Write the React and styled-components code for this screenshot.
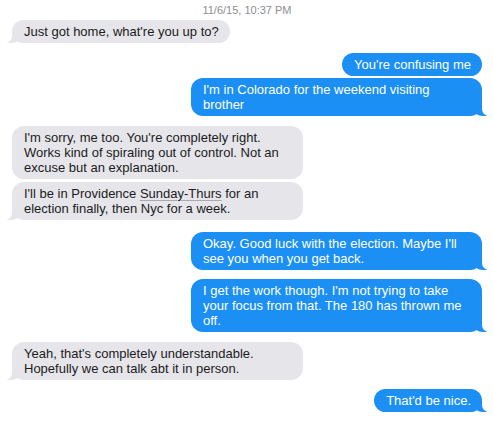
import React from 'react';
import styled, { createGlobalStyle } from 'styled-components';

const GlobalStyle = createGlobalStyle`
  body {
    margin: 0;
    background: #fff;
    font-family: "Liberation Sans", Arial, sans-serif;
  }
`;

const Thread = styled.div`
  width: 493px;
  height: 423px;
  box-sizing: border-box;
  padding: 4px 11px 0 12px;
  display: flex;
  flex-direction: column;
  overflow: hidden;
`;

const Stamp = styled.div`
  text-align: center;
  font-size: 11px;
  line-height: 13px;
  color: #8e8e93;
  margin-bottom: 3px;
`;

const Row = styled.div`
  display: flex;
  justify-content: ${(p) => (p.$me ? 'flex-end' : 'flex-start')};
  margin-top: ${(p) => p.$gap}px;
`;

const Bubble = styled.div`
  position: relative;
  max-width: 268px;
  padding: 4px 11px 4px 12px;
  border-radius: 12px;
  font-size: 13px;
  line-height: 15px;
  background: ${(p) => (p.$me ? '#1b8ff4' : '#e5e5ea')};
  color: ${(p) => (p.$me ? '#fff' : '#1c1c1c')};

  ${(p) =>
    p.$tail &&
    `
    &::before {
      content: "";
      position: absolute;
      bottom: 0;
      ${p.$me ? 'right: -5px;' : 'left: -5px;'}
      width: 14px;
      height: 12px;
      background: ${p.$me ? '#1b8ff4' : '#e5e5ea'};
      ${p.$me ? 'border-bottom-left-radius: 10px 8px;' : 'border-bottom-right-radius: 10px 8px;'}
    }
    &::after {
      content: "";
      position: absolute;
      bottom: 0;
      ${p.$me ? 'right: -12px;' : 'left: -12px;'}
      width: 12px;
      height: 12px;
      background: #fff;
      ${p.$me ? 'border-bottom-left-radius: 7px;' : 'border-bottom-right-radius: 7px;'}
    }
  `}
`;

const Detected = styled.span`
  text-decoration: underline;
  text-decoration-color: #a9a9ae;
  text-underline-offset: 2px;
`;

const messages = [
  { me: false, gap: 0, tail: true, text: "Just got home, what're you up to?" },
  { me: true, gap: 10, tail: false, text: "You're confusing me" },
  { me: true, gap: 2, tail: true, text: "I'm in Colorado for the weekend visiting brother" },
  {
    me: false,
    gap: 10,
    tail: false,
    text: "I'm sorry, me too. You're completely right. Works kind of spiraling out of control. Not an excuse but an explanation.",
  },
  {
    me: false,
    gap: 3,
    tail: true,
    text: (
      <>
        I'll be in Providence <Detected>Sunday-Thurs</Detected> for an election finally, then Nyc for a week.
      </>
    ),
  },
  { me: true, gap: 12, tail: true, text: "Okay. Good luck with the election. Maybe I'll see you when you get back." },
  {
    me: true,
    gap: 9,
    tail: true,
    text: "I get the work though. I'm not trying to take your focus from that. The 180 has thrown me off.",
  },
  {
    me: false,
    gap: 10,
    tail: true,
    text: "Yeah, that's completely understandable. Hopefully we can talk abt it in person.",
  },
  { me: true, gap: 9, tail: true, text: "That'd be nice." },
];

export default function App() {
  return (
    <>
      <GlobalStyle />
      <Thread>
        <Stamp>11/6/15, 10:37 PM</Stamp>
        {messages.map((m, i) => (
          <Row key={i} $me={m.me} $gap={m.gap}>
            <Bubble $me={m.me} $tail={m.tail}>
              {m.text}
            </Bubble>
          </Row>
        ))}
      </Thread>
    </>
  );
}
